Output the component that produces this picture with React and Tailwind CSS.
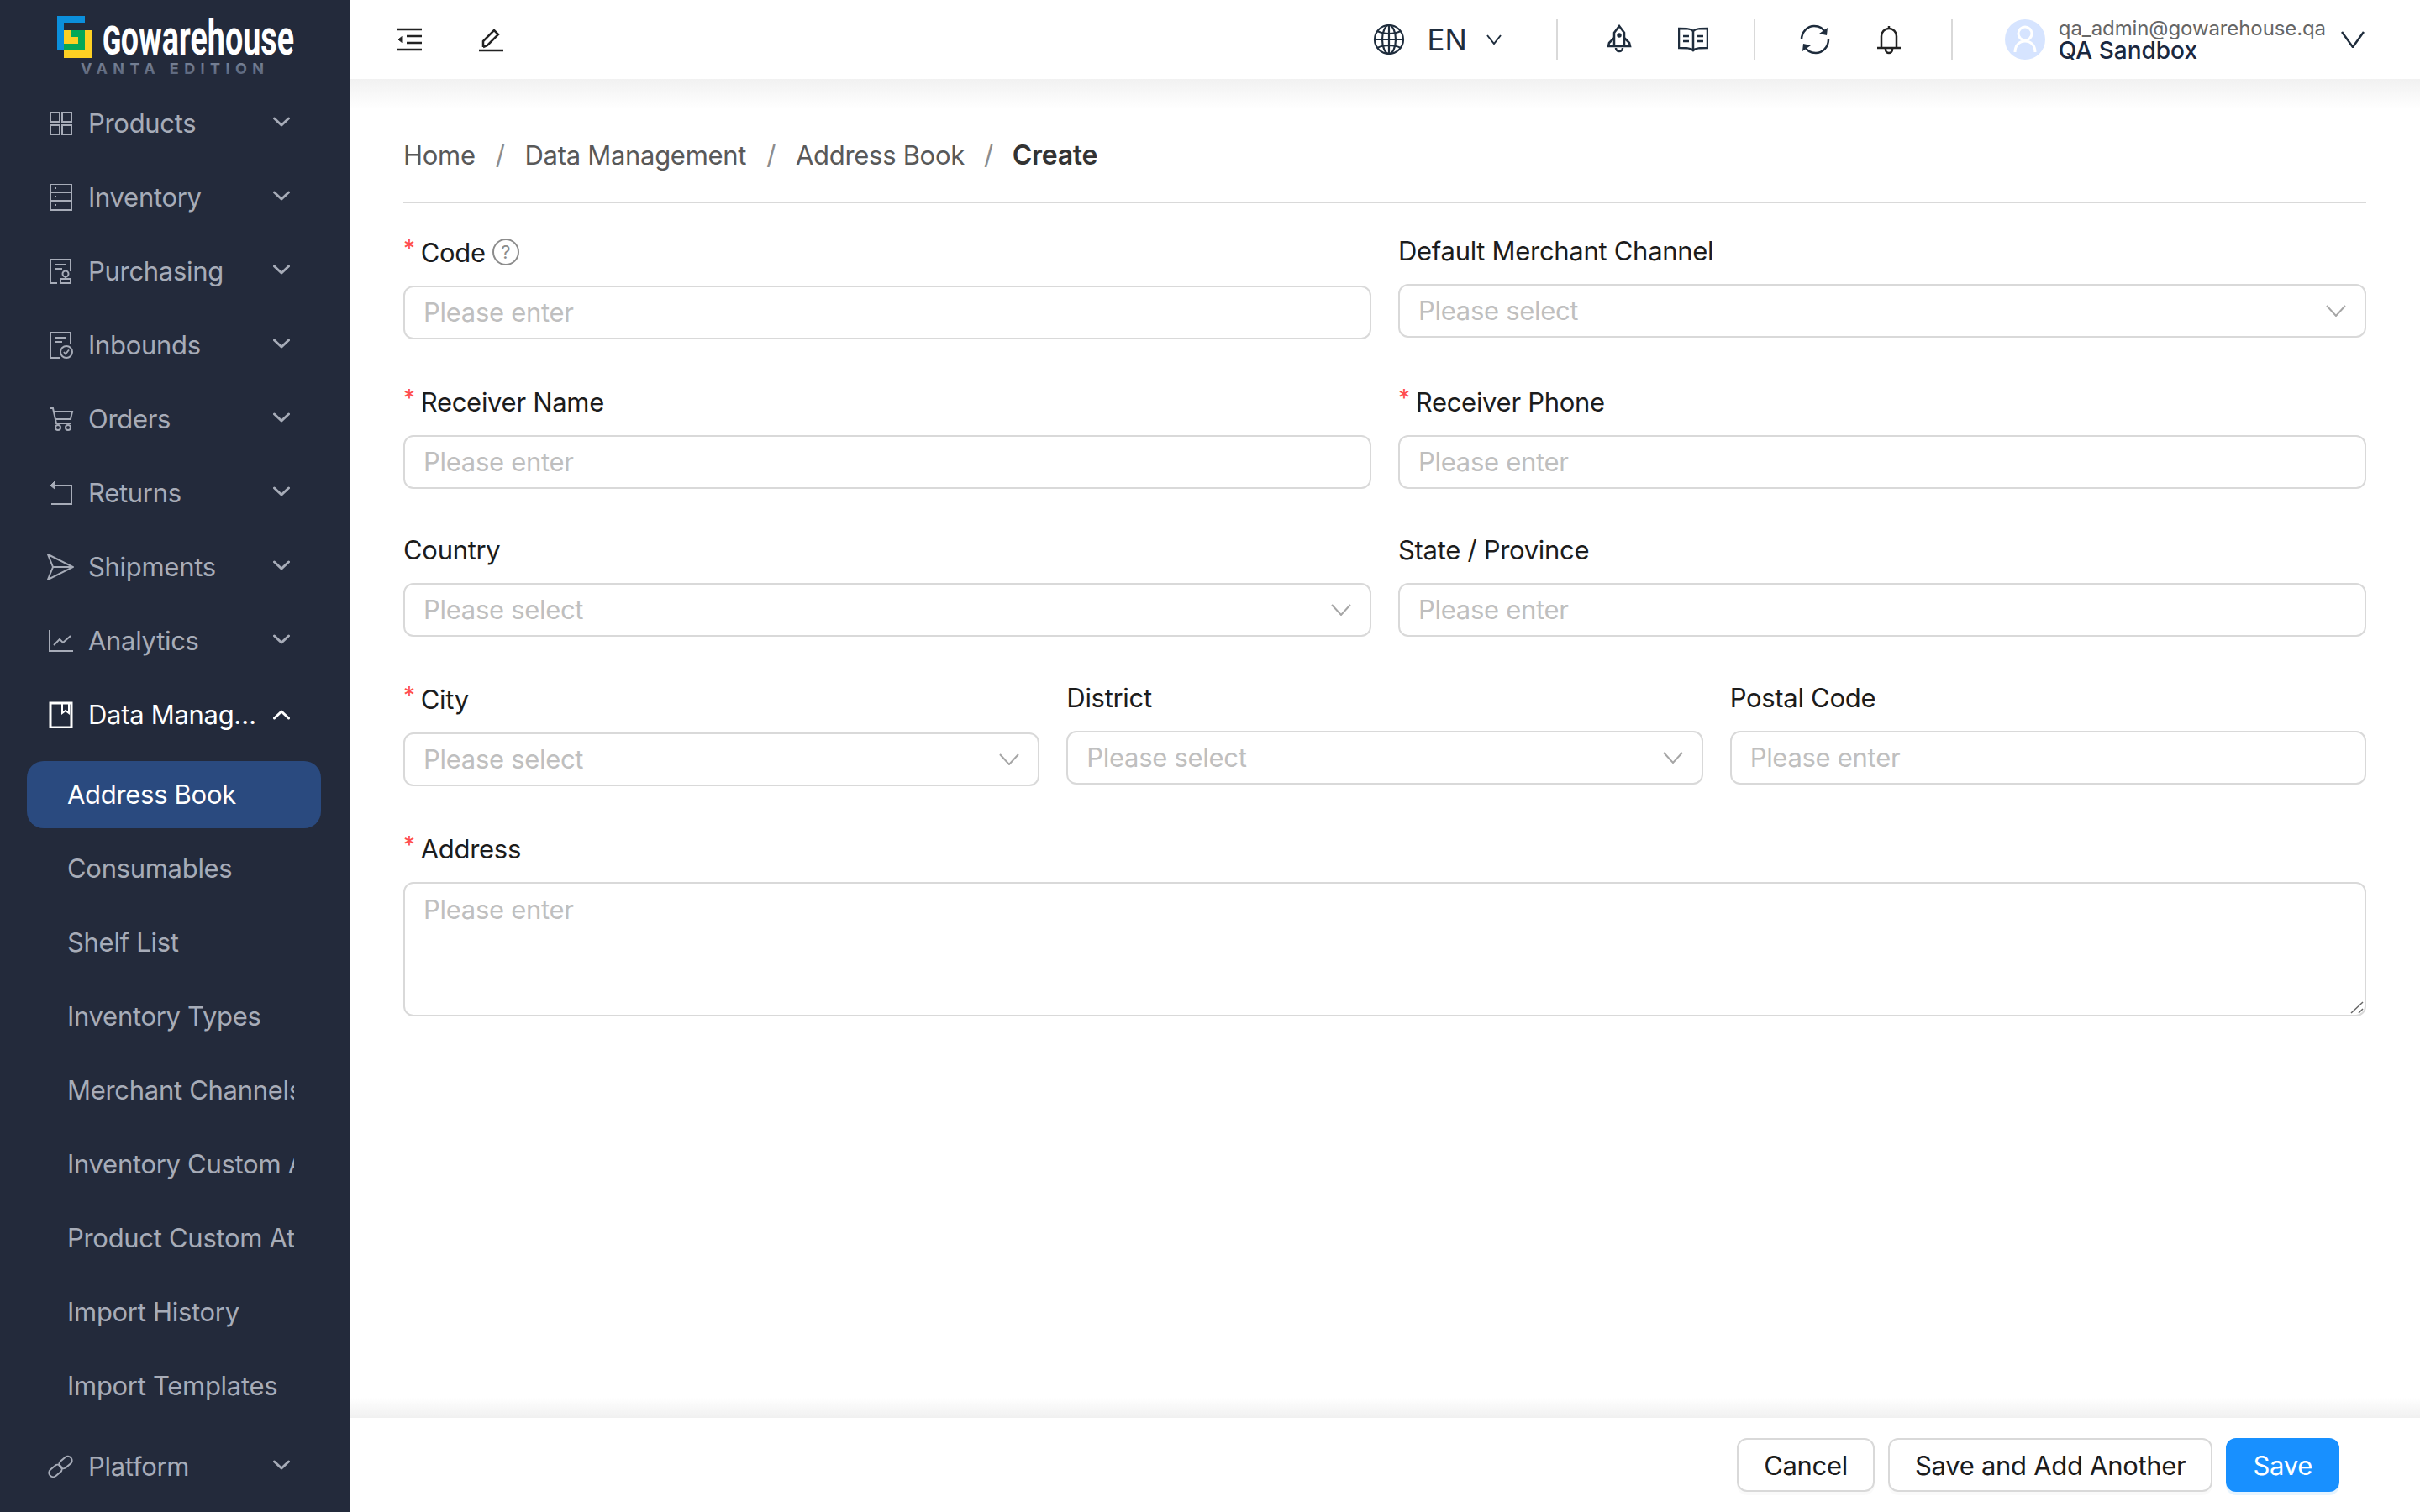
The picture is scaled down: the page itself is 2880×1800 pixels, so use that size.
const font = { fontFamily: 'Inter, "Noto Sans", sans-serif' }

function Chevron({ up, className }) {
  return (
    <svg width="20" height="12" viewBox="0 0 20 12" fill="none" stroke="currentColor" strokeWidth="3" strokeLinecap="round" strokeLinejoin="round" className={className}>
      <path d={up ? 'M1.5 10 10 2l8.5 8' : 'M1.5 2 10 10l8.5-8'} />
    </svg>
  )
}

function Thin({ w = 18, h = 12, sw = 2, className }) {
  return (
    <svg width={w} height={h} viewBox={`0 0 ${w} ${h}`} fill="none" stroke="currentColor" strokeWidth={sw} className={className}>
      <path d={`M1 1 ${w / 2} ${h - 1} ${w - 1} 1`} />
    </svg>
  )
}

const icon = { width: 32, height: 32, viewBox: '0 0 32 32', fill: 'none', stroke: 'currentColor', strokeWidth: 2 }

const icons = {
  products: <svg {...icon}><rect x="4" y="3" width="11" height="11" /><rect x="18" y="3" width="11" height="11" /><rect x="4" y="18" width="11" height="11" /><rect x="18" y="18" width="11" height="11" /></svg>,
  inventory: <svg {...icon}><rect x="4" y="0" width="25" height="31" /><path d="M4 10h25M4 20h25M9 5h2M9 15h2M9 25h2" /></svg>,
  purchasing: <svg {...icon}><path d="M28 16V2H4v28h8M9 8h14M9 13h9" /><circle cx="22" cy="19" r="3.5" /><path d="M22 22v3M16 25h12v5H16z" /></svg>,
  inbounds: <svg {...icon}><path d="M28 15V1H4v30h12M9 7h14M9 12h9" /><circle cx="23" cy="24" r="7" /><path d="m20 24 2 2.5 4-5" /></svg>,
  orders: <svg {...icon}><path d="M3 3h4l4 18h18M8 7h22l-2 9H10" /><circle cx="13" cy="26" r="3" /><circle cx="25" cy="26" r="3" /></svg>,
  returns: <svg {...icon}><path d="M8 7h21v22H5" /><path d="M9 2 4 7l5 4" fill="currentColor" strokeWidth="1" /></svg>,
  shipments: <svg {...icon}><path d="M1 1 31 16 1 31 7 16zM7 16h24" /></svg>,
  analytics: <svg {...icon}><path d="M3 3v25h28" /><path d="m8 21 7-7 4 4 9-8" /></svg>,
  data: <svg {...icon} strokeWidth="3"><path d="M4 2h25v29H4z" /><path d="M18 2v12l4-3 4 3V2" strokeWidth="2" /></svg>,
  platform: (
    <svg {...icon}>
      <rect x="1.5" y="16" width="17" height="10" rx="5" transform="rotate(-40 10 21)" />
      <rect x="13.5" y="6" width="17" height="10" rx="5" transform="rotate(-40 22 11)" />
    </svg>
  ),
}

const menu = [
  ['products', 'Products'],
  ['inventory', 'Inventory'],
  ['purchasing', 'Purchasing'],
  ['inbounds', 'Inbounds'],
  ['orders', 'Orders'],
  ['returns', 'Returns'],
  ['shipments', 'Shipments'],
  ['analytics', 'Analytics'],
]

const subMenu = ['Address Book', 'Consumables', 'Shelf List', 'Inventory Types', 'Merchant Channels', 'Inventory Custom Attributes', 'Product Custom Attributes', 'Import History', 'Import Templates']

function NavItem({ id, label, open }) {
  return (
    <div className={`flex h-[88px] items-center pl-[56px] pr-[71px] ${open ? 'text-white' : 'text-[#a7acb8]'}`}>
      <span className="flex w-[49px] shrink-0">{icons[id]}</span>
      <span className="min-w-0 flex-1 truncate text-[31px] leading-[44px] tracking-[-0.3px]">{label}</span>
      <Chevron up={open} className={`ml-3 shrink-0 ${open ? '' : 'mb-1'}`} />
    </div>
  )
}

function Logo() {
  return (
    <div className="flex h-[103px] items-start">
      <svg width="416" height="103" viewBox="0 0 416 103">
        <defs>
          <linearGradient id="vanta" x1="0" y1="0" x2="0" y2="1">
            <stop offset="0" stopColor="#7d889b" />
            <stop offset="1" stopColor="#566178" />
          </linearGradient>
        </defs>
        <path d="M68 19h33v8H76v33h-8z" fill="#0b8fdc" />
        <path d="M76 36h33v33H76z" fill="#fdd023" />
        <path d="M85 36h16v24H76v-8h17v-8h-8z" fill="#04a857" />
        <text x="122" y="65" fontFamily="Roboto, sans-serif" fontWeight="700" fontSize="60" fill="#fff" textLength="228" lengthAdjust="spacingAndGlyphs">
          <tspan fontVariant="small-caps">g</tspan>owarehouse
        </text>
        <text x="96" y="88" fontFamily="Inter, sans-serif" fontWeight="700" fontSize="18" fill="url(#vanta)" textLength="218">VANTA EDITION</text>
      </svg>
    </div>
  )
}

function Sidebar() {
  return (
    <aside className="h-full w-[416px] shrink-0 overflow-hidden bg-[#232a3b]">
      <Logo />
      {menu.map(([id, label]) => <NavItem key={id} id={id} label={label} />)}
      <NavItem id="data" label="Data Management" open />
      <div className="mb-2 mt-[7px]">
        {subMenu.map((label, i) => (
          <div key={label} className="flex h-[88px] items-center px-[32px]">
            <div className={`flex h-[80px] w-[350px] items-center rounded-[20px] pl-[48px] text-[31px] tracking-[-0.3px] ${i === 0 ? 'bg-[#2a4a7f] text-white' : 'text-[#a7acb8]'}`}>
              <span className="w-[270px] overflow-hidden whitespace-nowrap">{label}</span>
            </div>
          </div>
        ))}
      </div>
      <NavItem id="platform" label="Platform" />
    </aside>
  )
}

function Header() {
  const divider = 'h-[48px] w-[2px] bg-[#d9d9d9]'
  return (
    <header className="relative z-10 flex h-[94px] shrink-0 items-center bg-white pl-[57px] text-[#1f2d3d]">
      <svg width="30" height="28" viewBox="0 0 30 28" fill="none" stroke="#222" strokeWidth="2.5">
        <path d="M0 2h29M11 10h18M11 18h18M0 26h29" />
        <path d="M1 14 6 10v8z" fill="#222" strokeWidth="1" />
      </svg>
      <svg width="30" height="30" viewBox="0 0 30 30" fill="none" stroke="#222" strokeWidth="2.5" className="ml-[67px]">
        <path d="M0 28h29M5 24v-7L18 4l5 5-13 13-5 2" />
      </svg>
      <div className="flex-1" />
      <svg width="38" height="38" viewBox="0 0 38 38" fill="none" stroke="currentColor" strokeWidth="2.2">
        <circle cx="19" cy="19" r="17" />
        <ellipse cx="19" cy="19" rx="8" ry="17" />
        <path d="M19 2v34M2 19h34M5 9c8 4 20 4 28 0M5 29c8-4 20-4 28 0" />
      </svg>
      <span className="ml-[26px] text-[35px] leading-none">EN</span>
      <Thin className="ml-[23px]" />
      <div className={`ml-[65px] ${divider}`} />
      <svg width="30" height="36" viewBox="0 0 30 36" fill="none" stroke="currentColor" strokeWidth="2.5" className="ml-[58px]">
        <path d="M15 2 9 10v16h12V10zM9 16l-6 6-1 4h7M21 16l6 6 1 4h-7M11 28a4 4 0 0 0 8 0" />
        <circle cx="15" cy="13" r="1.5" fill="currentColor" />
      </svg>
      <svg width="36" height="30" viewBox="0 0 36 30" fill="none" stroke="currentColor" strokeWidth="2.5" className="ml-[55px]">
        <path d="M18 5c-3-3-8-3-17-3v23c9 0 14 0 17 3 3-3 8-3 17-3V2c-9 0-14 0-17 3zM18 5v23M6 11h7M6 17h7M23 11h7M23 17h7" />
      </svg>
      <div className={`ml-[54px] ${divider}`} />
      <svg width="36" height="36" viewBox="0 0 36 36" fill="none" stroke="currentColor" strokeWidth="2.5" className="ml-[53px]">
        <path d="M2 18C2 9 9 2 17 2c6 0 11 3 13 8M34 18c0 9-7 16-15 16-6 0-11-3-13-8" />
        <path d="m33 4-1 9-9-2zM3 32l1-9 9 2z" fill="currentColor" strokeWidth="0" />
      </svg>
      <svg width="30" height="36" viewBox="0 0 30 36" fill="none" stroke="#222" strokeWidth="2.5" className="ml-[55px]">
        <path d="M15 2v3M6 28V14a9 9 0 0 1 18 0v14M1 28h28M11 28v2a4 4 0 0 0 8 0v-2" />
      </svg>
      <div className={`ml-[59px] ${divider}`} />
      <div className="ml-[62px] flex h-[48px] w-[48px] items-center justify-center rounded-full bg-[#d6e4ff]">
        <svg width="28" height="34" viewBox="0 0 28 34" fill="none" stroke="#fff" strokeWidth="3">
          <circle cx="14" cy="10" r="8" />
          <path d="M2 32c0-8 5-13 12-13s12 5 12 13" />
        </svg>
      </div>
      <div className="ml-4 flex flex-col">
        <span className="text-[24px] leading-[26px] tracking-[-0.1px] text-[#666]">qa_admin@gowarehouse.qa</span>
        <span className="text-[28px] font-medium leading-[26px] text-[#1a2840]">QA Sandbox</span>
      </div>
      <Thin w={28} h={20} sw={2.5} className="ml-[18px] mr-[66px]" />
    </header>
  )
}

function Label({ text, required, help }) {
  return (
    <div className={`mb-4 flex items-start text-[31px] tracking-[-0.3px] text-[#1c1c1c] ${required ? 'h-[46px] leading-[46px]' : 'h-[44px] leading-[42px]'}`}>
      {required && <span className="mr-[7px] text-[28px] leading-[36px] text-[#ff4d4f]">*</span>}
      <span>{text}</span>
      {help && (
        <span className="ml-2 mt-[6px] flex h-[32px] w-[32px] items-center justify-center rounded-full border-2 border-[#8c8c8c] text-[22px] leading-none text-[#8c8c8c]">?</span>
      )}
    </div>
  )
}

function Field({ label, required, help, select }) {
  return (
    <div>
      <Label text={label} required={required} help={help} />
      <div className="flex h-[64px] items-center rounded-[12px] border-2 border-[#d9d9d9] bg-white pl-[22px] pr-[22px]">
        <span className="flex-1 text-[31px] tracking-[-0.3px] text-[#bfbfbf]">{select ? 'Please select' : 'Please enter'}</span>
        {select && <Thin w={24} h={14} className="text-[#a6a6a6]" />}
      </div>
    </div>
  )
}

function Content() {
  return (
    <div className="relative flex-1 overflow-hidden bg-white px-[64px]">
      <div className="absolute inset-x-0 top-0 h-[36px] bg-gradient-to-b from-[#f1f1f1] to-white" />
      <div className="absolute inset-x-0 bottom-0 h-[24px] bg-gradient-to-t from-[#f0f0f0] to-white" />
      <div className="relative">
        <nav className="flex h-[148px] items-center border-b-2 border-[#d9d9d9] pt-[36px] text-[31px] tracking-[-0.3px] text-[#595959]">
          <span>Home</span>
          <span className="mx-[24px] text-[#8c8c8c]">/</span>
          <span>Data Management</span>
          <span className="mx-[24px] text-[#8c8c8c]">/</span>
          <span>Address Book</span>
          <span className="mx-[23px] text-[#8c8c8c]">/</span>
          <span className="text-[32px] font-semibold text-[#333]">Create</span>
        </nav>
        <div className="mt-[36px] flex flex-col gap-[52px]">
          <div className="grid grid-cols-2 items-start gap-x-[32px]">
            <Field label="Code" required help />
            <Field label="Default Merchant Channel" select />
          </div>
          <div className="grid grid-cols-2 items-start gap-x-[32px]">
            <Field label="Receiver Name" required />
            <Field label="Receiver Phone" required />
          </div>
          <div className="grid grid-cols-2 items-start gap-x-[32px]">
            <Field label="Country" select />
            <Field label="State / Province" />
          </div>
          <div className="grid grid-cols-3 items-start gap-x-[32px]">
            <Field label="City" required select />
            <Field label="District" select />
            <Field label="Postal Code" />
          </div>
          <div>
            <Label text="Address" required />
            <div className="relative">
              <textarea
                placeholder="Please enter"
                className="block h-[160px] w-full resize-none rounded-[12px] border-2 border-[#d9d9d9] bg-white px-[22px] py-[9px] text-[31px] leading-[44px] tracking-[-0.3px] outline-none placeholder:text-[#bfbfbf]"
              />
              <svg width="20" height="20" viewBox="0 0 20 20" fill="none" stroke="#666" strokeWidth="1.5" className="absolute bottom-[1px] right-[2px]">
                <path d="M4 17 18 4M13 17l5-5" />
              </svg>
            </div>
          </div>
        </div>
      </div>
    </div>
  )
}

function Footer() {
  const btn = 'flex h-[64px] items-center rounded-[12px] border-2 px-[30px] text-[31px] leading-none tracking-[-0.3px]'
  return (
    <footer className="flex h-[112px] shrink-0 items-center justify-end gap-[16px] bg-white pr-[96px]">
      <button className={`${btn} border-[#d9d9d9] bg-white text-[#1c1c1c] shadow-[0_4px_0_rgba(0,0,0,0.02)]`}>Cancel</button>
      <button className={`${btn} border-[#d9d9d9] bg-white text-[#1c1c1c] shadow-[0_4px_0_rgba(0,0,0,0.02)]`}>Save and Add Another</button>
      <button className={`${btn} border-[#1890ff] bg-[#1890ff] text-white shadow-[0_4px_0_rgba(5,145,255,0.1)]`}>Save</button>
    </footer>
  )
}

export default function App() {
  return (
    <div className="flex h-[1800px] w-[2880px] overflow-hidden" style={font}>
      <Sidebar />
      <main className="flex min-w-0 flex-1 flex-col">
        <Header />
        <Content />
        <Footer />
      </main>
    </div>
  )
}
